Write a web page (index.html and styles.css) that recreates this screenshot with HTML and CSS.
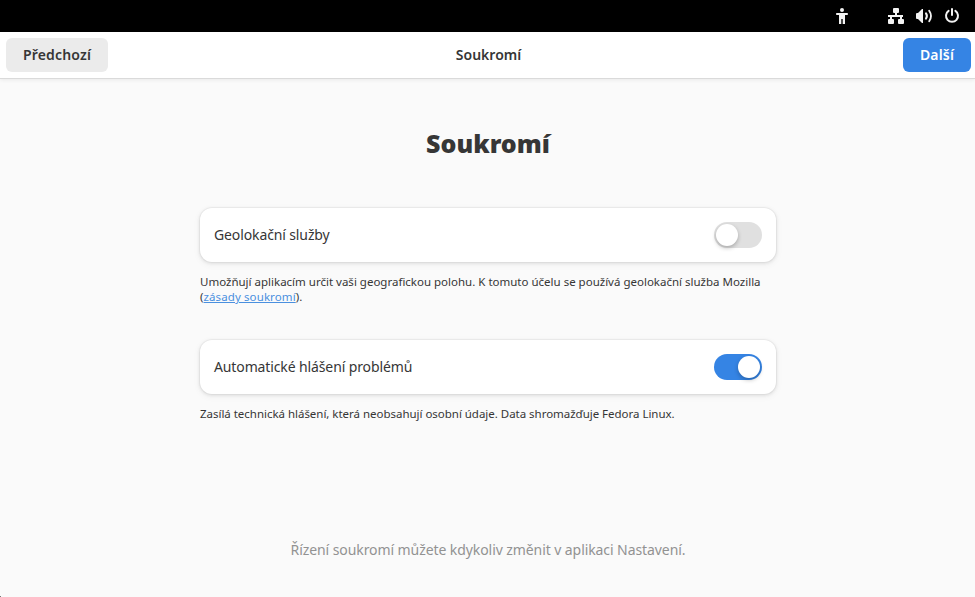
FILE: index.html
```html
<!DOCTYPE html>
<html lang="cs">
<head>
<meta charset="utf-8">
<title>Soukromí</title>
<link rel="stylesheet" href="styles.css">
</head>
<body>
<div class="topbar">
  <svg class="a11y" width="16" height="16" viewBox="0 0 16 16" fill="currentColor"><circle cx="8" cy="2" r="2"/><path d="M2.700 5h10.600c.9 0 .9 2 0 2H11v8.900H8.700V11H7.300v4.900H5V7H2.700c-.9 0-.9-2 0-2z"/></svg>
  <svg width="16" height="16" viewBox="0 0 16 16" fill="currentColor"><path d="M6 0h4q1 0 1 1v3q0 1-1 1H9v2h6v2h-1v2h1q1 0 1 1v3q0 1-1 1h-4q-1 0-1-1v-3q0-1 1-1h1V9H4v2h1q1 0 1 1v3q0 1-1 1H1q-1 0-1-1v-3q0-1 1-1h1V9H0V7h7V5H6Q5 5 5 4V1q0-1 1-1z"/></svg>
  <svg width="16" height="16" viewBox="0 0 16 16" fill="none" stroke="currentColor" stroke-width="2" stroke-linecap="round"><path fill="currentColor" stroke="none" d="M7 1v14H6L2 11H1q-1 0-1-1V6q0-1 1-1h1l4-4z"/><path d="M10 5.400q1.800 2.600 0 5.200"/><path stroke-width="1.800" d="M13.200 2.800q3.600 5.200 0 10.400"/></svg>
  <svg width="16" height="16" viewBox="0 0 16 16" fill="none" stroke="currentColor" stroke-width="2" stroke-linecap="round"><path d="M4.600 2.900a6 6 0 1 0 6.800 0M8 1v6"/></svg>
</div>
<header class="headerbar">
  <button class="btn back">Předchozí</button>
  <div class="title">Soukromí</div>
  <button class="btn next">Další</button>
</header>
<main class="page">
  <h1>Soukromí</h1>
  <section>
    <div class="card"><span class="label">Geolokační služby</span><span class="switch"></span></div>
    <p>Umožňují aplikacím určit vaši geografickou polohu. K tomuto účelu se používá geolokační služba Mozilla<br><span class="policy">(<a>zásady soukromí</a>).</span></p>
  </section>
  <section>
    <div class="card"><span class="label">Automatické hlášení problémů</span><span class="switch on"></span></div>
    <p class="report">Zasílá technická hlášení, která neobsahují osobní údaje. Data shromažďuje Fedora Linux.</p>
  </section>
  <footer>Řízení soukromí můžete kdykoliv změnit v aplikaci Nastavení.</footer>
</main>
<i class="corner"></i>
</body>
</html>
```
FILE: styles.css
```css
* { box-sizing: border-box; }
body {
  margin: 0;
  height: 597px;
  overflow: hidden;
  background: #fafafa;
  color: #363636;
  font: 14px/20px "Noto Sans", sans-serif;
}
.topbar {
  height: 32px;
  background: #000;
  color: #f2f2f2;
  display: flex;
  align-items: center;
  justify-content: flex-end;
  gap: 12px;
  padding-right: 15px;
}
.a11y { margin-right: 26px; }
.headerbar {
  height: 46px;
  background: #fff;
  box-shadow: 0 1px #dadada, 0 2px 4px rgba(0, 0, 0, .07);
  display: grid;
  grid-template-columns: 102px 1fr 68px;
  align-items: center;
  padding: 0 4px 0 6px;
  font-weight: 600;
}
.title { padding-right: 34px; text-align: center; }
.btn {
  height: 34px;
  border: 0;
  border-radius: 6px;
  padding: 0;
  font: inherit;
  color: inherit;
  letter-spacing: .17px;
  white-space: nowrap;
}
.back { background: #ebebeb; }
.next { background: #3584e4; color: #fff; }
.page { width: 576px; margin: 0 auto; position: relative; left: .5px; }
h1 {
  margin: 0;
  padding-top: 45px;
  height: 130px;
  font-size: 25px;
  line-height: 40px;
  font-weight: 900;
  text-align: center;
}
section { height: 132px; }
.card {
  height: 54px;
  background: #fff;
  border-radius: 12px;
  box-shadow: 0 0 0 1px rgba(0, 0, 0, .03), 0 1px 3px 1px rgba(0, 0, 0, .07), 0 2px 6px 2px rgba(0, 0, 0, .03);
  display: flex;
  align-items: center;
  justify-content: space-between;
  padding: 0 14px;
}
.label { letter-spacing: -.12px; }
.switch {
  width: 48px;
  height: 26px;
  border-radius: 13px;
  background: #e0e0e0;
  padding: 2px;
  display: flex;
}
.switch::before {
  content: "";
  width: 22px;
  height: 22px;
  border-radius: 50%;
  background: #fff;
  box-shadow: 0 2px 4px rgba(0, 0, 0, .25);
}
.switch.on { background: #3584e4; justify-content: flex-end; }
p { margin: 12px 0 0; font-size: 11.5px; line-height: 15px; white-space: nowrap; }
.policy { letter-spacing: .1px; }
.report { letter-spacing: -.025px; }
a { color: #4a90df; text-decoration: underline; }
footer { margin-top: 68px; text-align: center; color: #929292; letter-spacing: -.08px; white-space: nowrap; }
.corner {
  position: absolute;
  left: 0;
  bottom: 0;
  width: 1px;
  height: 1px;
  background: #777;
}
```
